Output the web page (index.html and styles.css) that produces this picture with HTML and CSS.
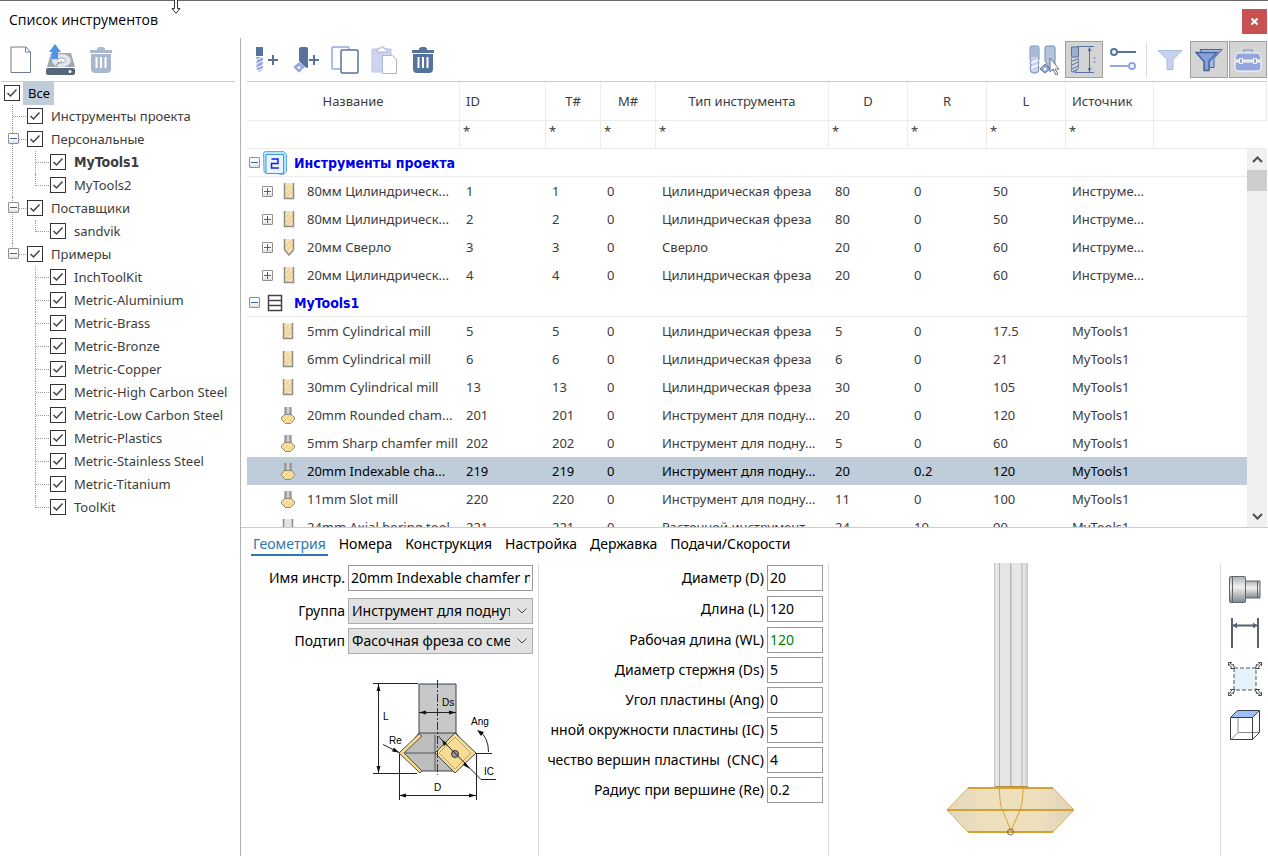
FILE: index.html
```html
<!DOCTYPE html>
<html lang="ru">
<head>
<meta charset="utf-8">
<meta name="viewport" content="width=device-width, initial-scale=1">
<title>Список инструментов</title>
<link rel="stylesheet" href="styles.css">
</head>
<body>

<!-- shared icons -->
<svg class="defs" width="0" height="0" aria-hidden="true">
  <defs>
    <linearGradient id="steel" x1="0" y1="0" x2="0" y2="1">
      <stop offset="0" stop-color="#a9adb0"/><stop offset=".4" stop-color="#f1f2f3"/><stop offset="1" stop-color="#85898c"/>
    </linearGradient>
    <linearGradient id="shank" x1="0" y1="0" x2="1" y2="0">
      <stop offset="0" stop-color="#777"/><stop offset=".5" stop-color="#ddd"/><stop offset="1" stop-color="#777"/>
    </linearGradient>
    <linearGradient id="gold" x1="0" y1="0" x2="1" y2="0">
      <stop offset="0" stop-color="#e2d8bf"/><stop offset=".35" stop-color="#efe0bd"/><stop offset=".7" stop-color="#efe0bd"/><stop offset="1" stop-color="#ddd3bb"/>
    </linearGradient>
  </defs>
  <symbol id="i-trash" viewBox="0 0 24 28">
    <path d="M8 4V2.500l2-1.500h4l2 1.500V4h7v3H1V4zM2 8h20v15q0 4-4 4H6q-4 0-4-4z" fill="currentColor"/>
    <path d="M7.500 11v11M12 11v11M16.500 11v11" stroke="#fff" stroke-width="2" fill="none"/>
  </symbol>
  <symbol id="i-mill" viewBox="0 0 16 20">
    <path d="M3 2h10v16H3z" fill="#f9e3b0"/>
    <path d="M4 9l5-5M4 14l8-8M5 17l7-7" stroke="#ecd29a" stroke-width="1.500"/>
    <path d="M3.500 2v15.500h9V2" fill="none" stroke="#8c8c8c" stroke-width="1.500"/>
  </symbol>
  <symbol id="i-drill" viewBox="0 0 16 20">
    <path d="M4 2h8v11l-4 5-4-5z" fill="#f9e3b0"/>
    <path d="M4 10l7-7M5 14l7-7" stroke="#ecd29a" stroke-width="1.500"/>
    <path d="M3.500 2v11l4.500 5 4.500-5V2" fill="none" stroke="#8c8c8c" stroke-width="1.500"/>
  </symbol>
  <symbol id="i-chamfer" viewBox="0 0 16 20">
    <path d="M4.500 2h7v8h-7z" fill="url(#shank)"/>
    <path d="M5 9.500h6l3.500 3v2l-4 4h-5l-4-4v-2z" fill="#fbdf9c" stroke="#8a8372"/>
    <path d="M4 16l6-6M8 17l5-4" stroke="#edc878"/>
  </symbol>
  <symbol id="i-bore" viewBox="0 0 16 20">
    <path d="M3 2h10v16H3z" fill="#e4e4e4"/>
    <path d="M3.500 2v16h9V2" fill="none" stroke="#8c8c8c" stroke-width="1.500"/>
  </symbol>
  <symbol id="i-stack" viewBox="0 0 24 24">
    <path d="M5.500 4.500h13v15h-13zM6 9.500h12M6 14.500h12" fill="#fff" stroke="#444" stroke-width="1.500"/>
  </symbol>
  <symbol id="i-project" viewBox="0 0 24 24">
    <path d="M.5 3q0-2.500 2-2.500h18l3 3v17l-3 3L1 21z" fill="#b9e4fb" stroke="#5aaeea"/>
    <path d="M3 3.500h17.500v19H3z" fill="#e9f6ff" stroke="#3e9be0"/>
    <path d="M8.500 8H15v4.500H8.500V17H16" fill="none" stroke="#1b1bf0" stroke-width="1.500"/>
  </symbol>
</svg>

<header class="titlebar">
  <h1>Список инструментов</h1>
  <button class="close" aria-label="Закрыть"><svg width="9" height="9" viewBox="0 0 9 9"><path d="M1.500 1.500l6 6M7.500 1.500l-6 6" stroke="#fff" stroke-width="2"/></svg></button>
  <svg class="cursor" width="10" height="15" viewBox="0 0 10 15"><path d="M3.500 0v8.500H1l4 5 4-5H6.500V0" fill="#fff" stroke="#333"/></svg>
</header>

<div class="window">

<aside class="sidebar">
  <div class="toolbar">
    <button aria-label="Создать"><svg width="22" height="28" viewBox="0 0 22 28"><path d="M1 1h15l4.500 5v20.500H1zM15.500 1.500V6h5" fill="#fff" stroke="#6d7d90"/></svg></button>
    <button aria-label="Загрузить"><svg width="30" height="32" viewBox="0 0 30 32"><path d="M5 9h20l4 14H1z" fill="#9fa9b4"/><ellipse cx="15.500" cy="16.500" rx="9.500" ry="6.500" fill="#dfe5ea"/><ellipse cx="15.500" cy="16.500" rx="4" ry="2.500" fill="#fff" stroke="#9fa9b4"/><path d="M16 17l-6 4" stroke="#7c8896"/><rect y="24" width="29" height="7" rx="2" fill="#56667a"/><circle cx="24" cy="27.500" r="1.500" fill="#fff"/><path d="M9 0l6 8h-3v7H6V8H3z" fill="#4f93e6"/></svg></button>
    <button class="faded" aria-label="Удалить"><svg width="24" height="28"><use href="#i-trash"/></svg></button>
  </div>

  <ul class="tree">
    <li><label class="current"><input type="checkbox" checked><span>Все</span></label>
      <ul>
        <li><label><input type="checkbox" checked><span>Инструменты проекта</span></label></li>
        <li><button class="box" aria-label="Свернуть"></button><label><input type="checkbox" checked><span>Персональные</span></label>
          <ul>
            <li><label><input type="checkbox" checked><span><b>MyTools1</b></span></label></li>
            <li><label><input type="checkbox" checked><span>MyTools2</span></label></li>
          </ul>
        </li>
        <li><button class="box" aria-label="Свернуть"></button><label><input type="checkbox" checked><span>Поставщики</span></label>
          <ul>
            <li><label><input type="checkbox" checked><span>sandvik</span></label></li>
          </ul>
        </li>
        <li><button class="box" aria-label="Свернуть"></button><label><input type="checkbox" checked><span>Примеры</span></label>
          <ul>
            <li><label><input type="checkbox" checked><span>InchToolKit</span></label></li>
            <li><label><input type="checkbox" checked><span>Metric-Aluminium</span></label></li>
            <li><label><input type="checkbox" checked><span>Metric-Brass</span></label></li>
            <li><label><input type="checkbox" checked><span>Metric-Bronze</span></label></li>
            <li><label><input type="checkbox" checked><span>Metric-Copper</span></label></li>
            <li><label><input type="checkbox" checked><span>Metric-High Carbon Steel</span></label></li>
            <li><label><input type="checkbox" checked><span>Metric-Low Carbon Steel</span></label></li>
            <li><label><input type="checkbox" checked><span>Metric-Plastics</span></label></li>
            <li><label><input type="checkbox" checked><span>Metric-Stainless Steel</span></label></li>
            <li><label><input type="checkbox" checked><span>Metric-Titanium</span></label></li>
            <li><label><input type="checkbox" checked><span>ToolKit</span></label></li>
          </ul>
        </li>
      </ul>
    </li>
  </ul>
</aside>

<main>
  <div class="toolbar">
    <button aria-label="Добавить фрезу"><svg width="24" height="28" viewBox="0 0 24 28"><path d="M1 1h7v9H1z" fill="#56739e"/><path d="M1 11h7v3l-1 1 1 2-1 2 1 2-1 3-3 2-2-2-1-3 1-2-1-2 1-2z" fill="#93a7de"/><path d="M1 14l7-3M1 18l7-3M1 22l7-3M2 25l5-2" stroke="#fff"/><path d="M13 14h10M18 9v10" stroke="#56739e" stroke-width="2"/></svg></button>
    <button aria-label="Добавить резец"><svg width="26" height="28" viewBox="0 0 26 28"><path d="M6 3q0-2 2-2h5q2 0 2 2v19l-4-1-5-6z" fill="#56739e"/><path d="M6 16l6 5-6 6-6-6z" fill="#93a7de" stroke="#fff" stroke-width=".5"/><circle cx="6" cy="21.500" r="1.500" fill="#fff"/><path d="M16 14h10M21 9v10" stroke="#56739e" stroke-width="2"/></svg></button>
    <button aria-label="Копировать"><svg width="28" height="28" viewBox="0 0 28 28"><rect x="1" y="1" width="17" height="22" rx="1" fill="#fff" stroke="#93a7de" stroke-width="1.500"/><rect x="10" y="4" width="17" height="23" rx="1" fill="#fff" stroke="#56739e" stroke-width="1.500"/></svg></button>
    <button aria-label="Вставить"><svg width="26" height="28" viewBox="0 0 26 28"><path d="M1 4q0-1 1-1h18v23H2q-1 0-1-1z" fill="#cbd5ee" stroke="#b9c4dd"/><path d="M6 6V3h3V1h4v2h3v3z" fill="#fff" stroke="#a9b7d2"/><path d="M11.500 9.500h10l4 4v14h-14z" fill="#fff" stroke="#a9b7d2"/></svg></button>
    <button class="trash" aria-label="Удалить"><svg width="24" height="28"><use href="#i-trash"/></svg></button>

    <span class="spacer"></span>

    <button class="small" aria-label="Выбрать инструмент"><svg width="32" height="32" viewBox="0 0 32 32"><path d="M1 4q0-2 2-2h5q2 0 2 2v11l-1 2 1 2-1 2 1 3-1 4-2 1H4l-2-1-1-4 1-3-1-2 1-2-1-2z" fill="#c6d4f0" stroke="#7189b3"/><path d="M1.500 4q0-1 1-1h6q1 0 1 1v9h-8z" fill="#a9bbd3"/><path d="M2 19l7-3M2 24l7-3" stroke="#fff" stroke-width="1.500"/><path d="M16 4q0-2 2-2h6q2 0 2 2v23l-5-2-5-8z" fill="#b3c4db" stroke="#7189b3"/><path d="M16 20l5 5-5 4-5-4z" fill="#8fa5d8" stroke="#5f78a8"/><circle cx="16" cy="25" r="1.500" fill="#fff"/><path d="M21 14v14l3-3 3 6 2-1-3-5h4z" fill="#fff" stroke="#66708a"/></svg></button>
    <button class="small on" aria-label="Размеры"><svg width="32" height="32" viewBox="0 0 32 32"><path d="M3.500 3h7v10h-7z" fill="#9fb0cc" stroke="#56739e"/><path d="M3.500 14v14M10.500 14v10l-3 4h-3" stroke="#7189b3" fill="none"/><path d="M4 17l6-2M4 21l6-3M4 25l6-3M4 28l6-3" stroke="#56739e"/><path d="M9 2.500h17M7 28.500h19M21.500 4v24" stroke="#56739e"/><path d="M21.500 3l2 4h-4zM21.500 28l2-4h-4z" fill="#56739e"/><path d="M26.500 13v2M26.500 17v2" stroke="#93a7de" stroke-width="2"/></svg></button>
    <button class="small" aria-label="Параметры"><svg width="28" height="26" viewBox="0 0 28 26"><path d="M8 5h19" stroke="#56739e" stroke-width="2"/><circle cx="5" cy="5" r="3" fill="#fff" stroke="#56739e" stroke-width="2"/><path d="M1 19h19" stroke="#93a7de" stroke-width="2"/><circle cx="23" cy="19" r="3" fill="#fff" stroke="#93a7de" stroke-width="2"/></svg></button>
    <span class="sep"></span>
    <button class="small" aria-label="Фильтр"><svg width="26" height="24" viewBox="0 0 26 24"><path d="M1 2.500h24l-9 9v10h-6v-10z" fill="#c6d2ee" stroke="#a8bcda"/></svg></button>
    <button class="small on" aria-label="Фильтр по проекту"><svg width="28" height="24" viewBox="0 0 28 24"><path d="M5 1.500h22l-8 9v9h-4z" fill="#a6bbe6" stroke="#3f659b"/><path d="M1 4.500h21l-8 9v9h-5v-9z" fill="#86a0dc" stroke="#3f659b" stroke-width="1.500"/></svg></button>
    <button class="small on" aria-label="Набор инструментов"><svg width="28" height="24" viewBox="0 0 28 24"><path d="M10 5V2h8v3" fill="none" stroke="#93a7de" stroke-width="1.500"/><path d="M4 5h20q2 0 3.500 7H.5Q2 5 4 5zM1 14h26v6q0 3-3 3H4q-3 0-3-3z" fill="#93a7de" stroke="#fff"/><path d="M5.500 10.500h3v5h-3zM19.500 10.500h3v5h-3z" fill="#93a7de" stroke="#fff"/></svg></button>
  </div>

  <table class="grid head">
    <colgroup><col class="c-name"><col class="c-id"><col class="c-num"><col class="c-num"><col class="c-type"><col class="c-size"><col class="c-size"><col class="c-size"><col class="c-src"><col></colgroup>
    <thead>
      <tr><th>Название</th><th class="left">ID</th><th>T#</th><th>M#</th><th>Тип инструмента</th><th>D</th><th>R</th><th>L</th><th class="left">Источник</th><th></th></tr>
      <tr class="filter"><td></td><td>*</td><td>*</td><td>*</td><td>*</td><td>*</td><td>*</td><td>*</td><td>*</td><td></td></tr>
    </thead>
  </table>

  <div class="scroller">
    <table class="grid">
      <colgroup><col class="c-name"><col class="c-id"><col class="c-num"><col class="c-num"><col class="c-type"><col class="c-size"><col class="c-size"><col class="c-size"><col class="c-src"><col></colgroup>
      <tbody>
        <tr class="group"><td colspan="10"><div><button class="box" aria-label="Свернуть"></button><svg width="24" height="24"><use href="#i-project"/></svg><b>Инструменты проекта</b></div></td></tr>
        <tr><td><div><button class="box plus" aria-label="Развернуть"></button><svg width="16" height="20"><use href="#i-mill"/></svg>80мм Цилиндрическ...</div></td><td>1</td><td>1</td><td>0</td><td>Цилиндрическая фреза</td><td>80</td><td>0</td><td>50</td><td>Инструме...</td><td></td></tr>
        <tr><td><div><button class="box plus" aria-label="Развернуть"></button><svg width="16" height="20"><use href="#i-mill"/></svg>80мм Цилиндрическ...</div></td><td>2</td><td>2</td><td>0</td><td>Цилиндрическая фреза</td><td>80</td><td>0</td><td>50</td><td>Инструме...</td><td></td></tr>
        <tr><td><div><button class="box plus" aria-label="Развернуть"></button><svg width="16" height="20"><use href="#i-drill"/></svg>20мм Сверло</div></td><td>3</td><td>3</td><td>0</td><td>Сверло</td><td>20</td><td>0</td><td>60</td><td>Инструме...</td><td></td></tr>
        <tr><td><div><button class="box plus" aria-label="Развернуть"></button><svg width="16" height="20"><use href="#i-mill"/></svg>20мм Цилиндрическ...</div></td><td>4</td><td>4</td><td>0</td><td>Цилиндрическая фреза</td><td>20</td><td>0</td><td>60</td><td>Инструме...</td><td></td></tr>
        <tr class="group"><td colspan="10"><div><button class="box" aria-label="Свернуть"></button><svg width="24" height="24"><use href="#i-stack"/></svg><b>MyTools1</b></div></td></tr>
        <tr><td><div class="leaf"><svg width="16" height="20"><use href="#i-mill"/></svg>5mm Cylindrical mill</div></td><td>5</td><td>5</td><td>0</td><td>Цилиндрическая фреза</td><td>5</td><td>0</td><td>17.5</td><td>MyTools1</td><td></td></tr>
        <tr><td><div class="leaf"><svg width="16" height="20"><use href="#i-mill"/></svg>6mm Cylindrical mill</div></td><td>6</td><td>6</td><td>0</td><td>Цилиндрическая фреза</td><td>6</td><td>0</td><td>21</td><td>MyTools1</td><td></td></tr>
        <tr><td><div class="leaf"><svg width="16" height="20"><use href="#i-mill"/></svg>30mm Cylindrical mill</div></td><td>13</td><td>13</td><td>0</td><td>Цилиндрическая фреза</td><td>30</td><td>0</td><td>105</td><td>MyTools1</td><td></td></tr>
        <tr><td><div class="leaf"><svg width="16" height="20"><use href="#i-chamfer"/></svg>20mm Rounded cham...</div></td><td>201</td><td>201</td><td>0</td><td>Инструмент для подну...</td><td>20</td><td>0</td><td>120</td><td>MyTools1</td><td></td></tr>
        <tr><td><div class="leaf"><svg width="16" height="20"><use href="#i-chamfer"/></svg>5mm Sharp chamfer mill</div></td><td>202</td><td>202</td><td>0</td><td>Инструмент для подну...</td><td>5</td><td>0</td><td>60</td><td>MyTools1</td><td></td></tr>
        <tr class="selected"><td><div class="leaf"><svg width="16" height="20"><use href="#i-chamfer"/></svg>20mm Indexable cha...</div></td><td>219</td><td>219</td><td>0</td><td>Инструмент для подну...</td><td>20</td><td>0.2</td><td>120</td><td>MyTools1</td><td></td></tr>
        <tr><td><div class="leaf"><svg width="16" height="20"><use href="#i-chamfer"/></svg>11mm Slot mill</div></td><td>220</td><td>220</td><td>0</td><td>Инструмент для подну...</td><td>11</td><td>0</td><td>100</td><td>MyTools1</td><td></td></tr>
        <tr><td><div class="leaf"><svg width="16" height="20"><use href="#i-bore"/></svg>24mm Axial boring tool</div></td><td>221</td><td>221</td><td>0</td><td>Расточной инструмент</td><td>24</td><td>10</td><td>90</td><td>MyTools1</td><td></td></tr>
      </tbody>
    </table>
    <div class="scrollbar">
      <button aria-label="Вверх"><svg width="11" height="7" viewBox="0 0 11 7"><path d="M1 6l4.500-4.500L10 6" fill="none" stroke="#505050" stroke-width="2"/></svg></button>
      <span class="thumb"></span>
      <button aria-label="Вниз"><svg width="11" height="7" viewBox="0 0 11 7"><path d="M1 1l4.500 4.500L10 1" fill="none" stroke="#505050" stroke-width="2"/></svg></button>
    </div>
  </div>

  <section class="details">
    <nav class="tabs">
      <a href="#geometry" class="active">Геометрия</a>
      <a href="#numbers">Номера</a>
      <a href="#design">Конструкция</a>
      <a href="#setup">Настройка</a>
      <a href="#holder">Державка</a>
      <a href="#feeds">Подачи/Скорости</a>
    </nav>

    <div class="panes">
      <form class="general">
        <div class="field"><label for="name">Имя инстр.</label><input id="name" type="text" value="20mm Indexable chamfer mill"></div>
        <div class="field"><label for="group">Группа</label><select id="group"><option>Инструмент для поднутрений</option></select></div>
        <div class="field"><label for="subtype">Подтип</label><select id="subtype"><option>Фасочная фреза со сменными пластинами</option></select></div>

        <svg class="scheme" width="130" height="124" viewBox="0 0 130 124">
          <path d="M48 4h37v50H48z" fill="#c8c8c8" stroke="#36405a"/>
          <path d="M48 53h37l10 13v14L84 91H49L32 73z" fill="#bdbdbd" stroke="#444"/>
          <path d="M32 73h36M64 55v36" stroke="#555"/>
          <path d="M48 54l-20 19 21 20 2-2-18-18 18-17z" fill="#f3d98c" stroke="#555"/>
          <path d="M84 53l21 20-21 20-20-20z" fill="#f6dc94" stroke="#444"/>
          <path d="M84 57l16 16-16 16-16-16z" fill="none" stroke="#a08a50" stroke-dasharray="2 1"/>
          <circle cx="84" cy="74" r="3.500" fill="#999" stroke="#333"/>
          <path d="M66.500 0v95" stroke="#333" stroke-dasharray="8 2 2 2"/>
          <g stroke="#222" fill="none">
            <path d="M2 3.500h45M2 93.500h44M7.500 4v89M48 32.500h37M28.500 74v46M105.500 74v46M28 115.500h77M12 64.500l16 8M67 56l43 43.500h15M105 73.500h16M117.500 72q0-14-9-21"/>
          </g>
          <path d="M7.500 4l2 7h-4zM7.500 93l2-7h-4zM48 32.500l7-2v4zM85 32.500l-7-2v4zM28 115.500l7-2v4zM105 115.500l-7-2v4zM28 72.500l-7-1 2-4zM71 60l5 3-3 3zM94 82l5 7-7-4zM106 50l7 2-3 4z" fill="#111"/>
          <g class="marks"><text x="12" y="40">L</text><text x="71" y="26">Ds</text><text x="100" y="45">Ang</text><text x="18" y="64">Re</text><text x="113" y="95">IC</text><text x="63" y="111">D</text></g>
        </svg>
      </form>

      <form class="params">
        <div class="field wide"><label for="d">Диаметр (D)</label><input id="d" type="text" value="20"></div>
        <div class="field wide"><label for="l">Длина (L)</label><input id="l" type="text" value="120"></div>
        <div class="field"><label for="wl">Рабочая длина (WL)</label><input id="wl" class="calc" type="text" value="120"></div>
        <div class="field"><label for="ds">Диаметр стержня (Ds)</label><input id="ds" type="text" value="5"></div>
        <div class="field"><label for="ang">Угол пластины (Ang)</label><input id="ang" type="text" value="0"></div>
        <div class="field"><label for="ic">нной окружности пластины (IC)</label><input id="ic" type="text" value="5"></div>
        <div class="field"><label for="cnc">чество вершин пластины&nbsp; (CNC)</label><input id="cnc" type="text" value="4"></div>
        <div class="field"><label for="re">Радиус при вершине (Re)</label><input id="re" type="text" value="0.2"></div>
      </form>

      <div class="preview">
        <svg width="130" height="276" viewBox="0 0 130 276">
          <path d="M48 0h34v225H48z" fill="#e6e6e6"/>
          <path d="M48.500 0v225M81.500 0v225M80 0v225" stroke="#c6c6c6"/>
          <path d="M53.500 0v225M76 0v225M64.500 0v225" stroke="#b4b4b4"/>
          <path d="M65.500 0v225" stroke="#d0d0d0"/>
          <path d="M22 225h85l21 22-21 22H22L1 247z" fill="url(#gold)" stroke="#dcb25a"/>
          <path d="M22 225h85M1 247h127M22 269h85" stroke="#d3a235" stroke-width="2"/>
          <path d="M49 223.500h33" stroke="#b98d3b"/>
          <path d="M53.500 226q0 15 3 21l8.500 21 9-21q3-8 3-21" fill="none" stroke="#d3a235"/>
          <circle cx="64.500" cy="269" r="3" fill="none" stroke="#75684a"/>
        </svg>
      </div>

      <div class="views">
        <button aria-label="Державка"><svg width="34" height="30" viewBox="0 0 34 30"><path d="M17 6h15v17H17z" fill="url(#steel)" stroke="#5e666d"/><path d="M29.500 6v17" stroke="#5e666d"/><rect x="1.500" y="1.500" width="16" height="26" rx="1" fill="url(#steel)" stroke="#5e666d"/><path d="M4.500 2v25" stroke="#5e666d"/></svg></button>
        <button aria-label="Размеры"><svg width="34" height="32" viewBox="0 0 34 32"><path d="M4 1v30M30 1v30M5 8.500h24" stroke="#56616f" stroke-width="2"/><path d="M5 8.500l4-3v6zM29 8.500l-4-3v6z" fill="#56616f"/></svg></button>
        <button aria-label="Показать все"><svg width="36" height="36" viewBox="0 0 36 36"><path d="M7 7h22v22H7z" fill="#e6f2f9" stroke="#555" stroke-dasharray="4 2"/><g fill="#fff" stroke="#444"><path id="corner" d="M1.500 1.500h3l-1 1 3 2v-1l1 4h-4l1-1-2-3-1 1z"/><use href="#corner" transform="matrix(-1 0 0 1 36 0)"/><use href="#corner" transform="matrix(1 0 0 -1 0 36)"/><use href="#corner" transform="matrix(-1 0 0 -1 36 36)"/></g></svg></button>
        <button aria-label="Вид"><svg width="32" height="32" viewBox="0 0 32 32"><path d="M9 1.500v22h21M9 23.500l-7 7" fill="none" stroke="#888"/><path d="M2 8.500l7-7h21l-7 7z" fill="#9fc0f5"/><path d="M1.500 8.500l7-7h22v22l-7 7h-22zM2 8.500h21.500v22M23.500 8.500l7-7" fill="none" stroke="#333f4d"/></svg></button>
      </div>
    </div>
  </section>
</main>

</div>
</body>
</html>
```

FILE: styles.css
```css
* { box-sizing: border-box; }

body, button, input, select { font: 14px/18px "Noto Sans", "DejaVu Sans Condensed", sans-serif; color: #000; }
b { font: bold 14px/18px "DejaVu Sans Condensed", "Noto Sans", sans-serif; }

body { margin: 0; height: 100vh; display: flex; flex-direction: column; background: #fff; overflow: hidden; }

.defs { position: absolute; }

button { border: 0; padding: 0; margin: 0; background: none; display: flex; align-items: center; justify-content: center; flex: none; }
svg { display: block; flex: none; }
ul { list-style: none; margin: 0; padding: 0; }

/* title */
.titlebar { display: flex; align-items: center; justify-content: space-between; height: 38px; padding: 4px 1px 0 9px; border-top: 1px solid #666; position: relative; flex: none; }
.titlebar h1 { margin: 0; padding-bottom: 4px; font: 14px/20px "Open Sans", "Noto Sans", sans-serif; }
.close { width: 25px; height: 25px; background: #c75050; }
.cursor { position: absolute; left: 171px; top: -1px; }

.window { flex: 1; display: flex; min-height: 0; }

.toolbar { display: flex; align-items: center; height: 44px; border-bottom: 1px solid #ccc; flex: none; }
.toolbar button { width: 40px; height: 36px; }

/* tree */
.sidebar { width: 241px; flex: none; border-right: 1px solid #b4b4b4; color: #3c3c3c; }
.sidebar .toolbar { margin: 0 5px 0 1px; }
.faded { color: #a9b8cf; }

.tree { color: #3c3c3c; padding-left: 4px; font-size: 13px; }
.tree ul { padding-left: 23px; }
.tree li { position: relative; }
.tree label { display: flex; align-items: center; height: 23px; }
.tree span { padding: 2px 4px 3px; margin-left: 4px; white-space: nowrap; }
.tree .current span { background: #bfcddb; color: #000; margin-left: 3px; padding: 2px 4px 3px 5px; }

.tree ul li::before { content: ""; position: absolute; left: -15px; top: 0; bottom: 0; border-left: 1px dotted #999; }
.tree ul li:last-child::before { bottom: auto; height: 12px; }
.tree ul label::before { content: ""; position: absolute; left: -14px; top: 11px; width: 13px; border-top: 1px dotted #999; }

.tree input { appearance: none; width: 16px; height: 16px; margin: 0 0 1px; border: 1px solid #333; background: #fff url("data:image/svg+xml,%3Csvg xmlns='http://www.w3.org/2000/svg' width='14' height='14'%3E%3Cpath d='M2.500 7l3 3 6-6.500' fill='none' stroke='%23444' stroke-width='1.500'/%3E%3C/svg%3E") no-repeat center; flex: none; }
.tree input:not(:checked) { background-image: none; }

.box { width: 11px; height: 11px; border: 1px solid #919191; border-radius: 1px; background: linear-gradient(#fff 50%, #ddd); position: relative; }
.box::before, .box.plus::after { content: ""; position: absolute; left: 1px; top: 4px; width: 7px; height: 1px; background: #3b5fa8; }
.box.plus::after { left: 4px; top: 1px; width: 1px; height: 7px; }
.tree .box { position: absolute; left: -19px; top: 5px; z-index: 1; }

main { flex: 1; min-width: 0; display: flex; flex-direction: column; }
main > .toolbar { margin: 0 1px 0 6px; }
.trash { color: #56739e; }
main > .toolbar button { width: 39px; }
.spacer { flex: 1; }
main > .toolbar .small { width: 38px; height: 37px; margin-left: 1px; }
.toolbar .on { background: #d4d4d4; border: 1px solid #a0a0a0; }
.sep { width: 1px; height: 36px; margin: 0 3px 0 4px; background: #ddd; }

/* tool list */
.grid { border-collapse: separate; border-spacing: 0; table-layout: fixed; width: 100%; color: #3c3c3c; font-size: 13px; }
.c-name { width: 213px; }
.c-id { width: 86px; }
.c-num { width: 55px; }
.c-type { width: 173px; }
.c-size { width: 79px; }
.c-src { width: 88px; }

.grid td, .grid th { height: 28px; padding: 0 0 0 6px; overflow: hidden; white-space: nowrap; text-align: left; font-weight: normal; }
.grid td > div { display: flex; align-items: center; height: 27px; margin-left: 9px; }

.head { width: auto; margin: 0 1px 0 6px; flex: none; }
.grid.head th, .grid.head td { border-right: 1px solid #ececec; border-bottom: 1px solid #ececec; }
.grid.head th { height: 39px; padding: 0; text-align: center; }
.grid.head .left { text-align: left; padding-left: 6px; }
.grid.head .filter td { padding: 0 0 7px 3px; }
.filter td:last-child { border-right: 0; }

.scroller { flex: 1; min-height: 0; overflow: hidden; display: flex; margin: 0 1px 0 6px; }
.scroller .grid { flex: 1; min-width: 0; align-self: flex-start; }
.grid .group td { border-bottom: 1px solid #ececec; padding-left: 2px; }
.grid .group div { margin-left: 0; }
.scroller .grid td svg { margin-right: 11px; }
.scroller .grid td .plus { margin-right: 8px; }
.scroller .grid td .plus + svg { margin-right: 10px; }
.scroller .grid .group svg { margin: 0 7px 0 3px; }
.scroller .grid .leaf { margin-left: 27px; }
.group b { color: #0000f0; }
.selected td { background: #bfcddb; color: #000; }

.scrollbar { width: 20px; background: #f0f0f0; display: flex; flex-direction: column; }
.scrollbar button { height: 21px; }
.thumb { height: 21px; background: #cdcdcd; margin-bottom: auto; }

/* tool editor */
.details { flex: none; border-top: 1px solid #ccc; }
.tabs { display: flex; gap: 9px; padding: 7px 0 7px 10px; }
.tabs a { color: #000; text-decoration: none; padding: 0 2px 1px; border-bottom: 2px solid transparent; white-space: nowrap; }
.tabs .active { color: #2e75b6; border-color: #2e75b6; }

.panes { display: flex; min-height: 293px; }
.panes > * { border-right: 1px solid #ddd; }
.panes > .views { border: 0; }

.field { display: flex; align-items: center; justify-content: flex-end; gap: 3px; height: 26px; margin-bottom: 4px; }
.field label { white-space: nowrap; }
.field input { height: 26px; border: 1px solid #999; padding: 0 2px 2px; background: #fff; min-width: 0; }

.general { width: 298px; flex: none; padding: 2px 5px 0 0; }
.general input, .general select { width: 185px; flex: none; }
.general .field:first-child { margin-bottom: 7px; }
.general select { appearance: none; height: 26px; border: 1px solid #adadad; border-radius: 0; padding: 0 22px 0 3px; background: #e1e1e1 url("data:image/svg+xml,%3Csvg xmlns='http://www.w3.org/2000/svg' width='10' height='6'%3E%3Cpath d='M.5.5l4.500 4.500L9.500.5' fill='none' stroke='%23444'/%3E%3C/svg%3E") no-repeat right 5px center; text-overflow: clip; }
.scheme { margin: 26px 0 0 130px; }
.marks { font: 10px "Liberation Sans", sans-serif; }

.params { width: 290px; flex: none; padding: 2px 5px 0 2px; overflow: hidden; }
.params .wide { margin-bottom: 5px; }
.params input { width: 56px; flex: none; }
.params .calc { color: #008000; }

.preview { flex: 1; min-width: 130px; display: flex; justify-content: center; padding-right: 28px; }

.views { width: 47px; flex: none; display: flex; flex-direction: column; align-items: center; gap: 12px; padding-top: 12px; }
```
